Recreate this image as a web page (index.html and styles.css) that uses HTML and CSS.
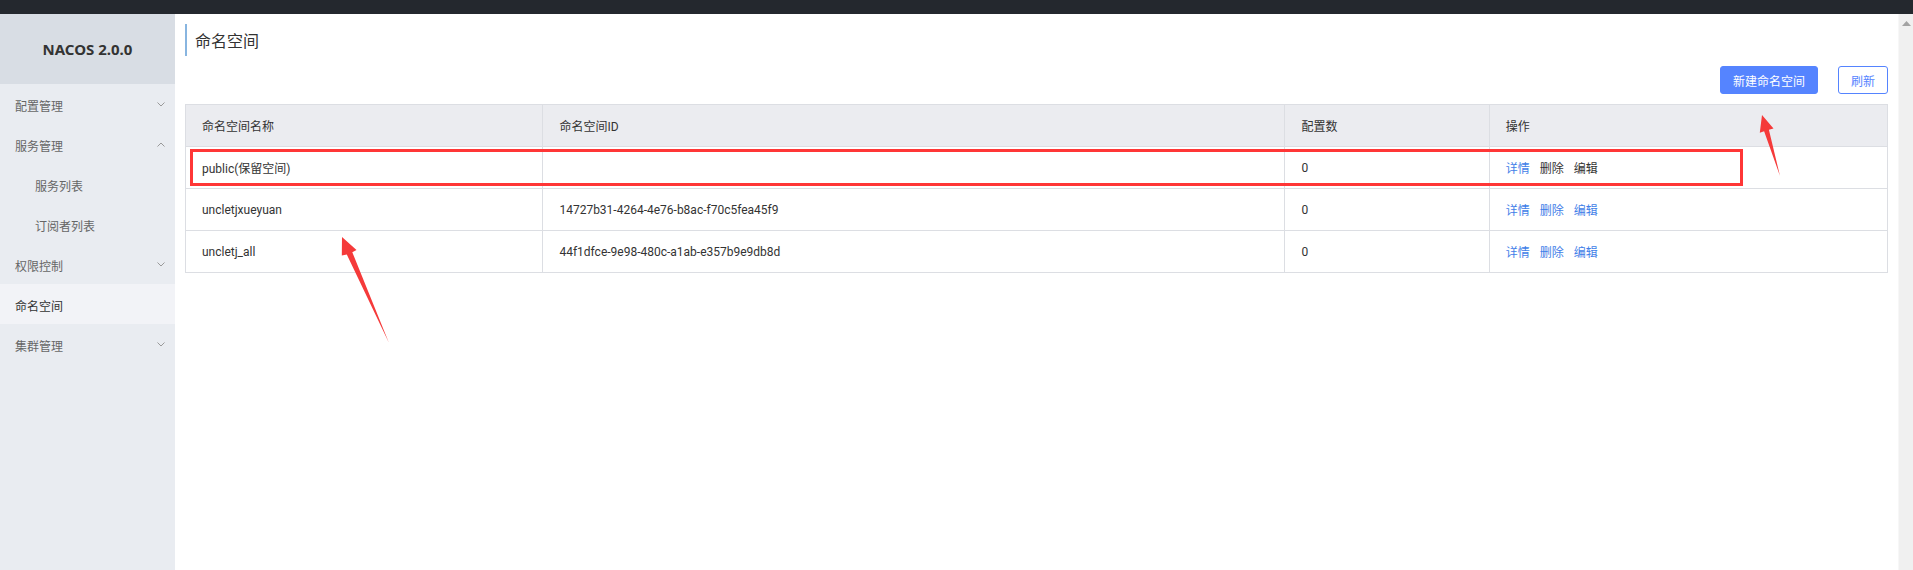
FILE: index.html
```html
<!DOCTYPE html>
<html lang="zh-CN">
<head>
    <meta charset="UTF-8">
    <title>Nacos - 命名空间</title>
    <link rel="stylesheet" href="styles.css">
</head>
<body>
    <div class="topbar"></div>
    <div class="layout">
        <aside class="sidebar">
            <div class="logo">NACOS 2.0.0</div>
            <ul class="menu">
                <li class="menu-item">配置管理
                    <svg class="chevron" width="8" height="5" viewBox="0 0 8 5"><polyline points="0.5,0.5 4,4 7.5,0.5"/></svg>
                </li>
                <li class="menu-item">服务管理
                    <svg class="chevron" width="8" height="5" viewBox="0 0 8 5"><polyline points="0.5,4.5 4,1 7.5,4.5"/></svg>
                </li>
                <li class="menu-item sub">服务列表</li>
                <li class="menu-item sub">订阅者列表</li>
                <li class="menu-item">权限控制
                    <svg class="chevron" width="8" height="5" viewBox="0 0 8 5"><polyline points="0.5,0.5 4,4 7.5,0.5"/></svg>
                </li>
                <li class="menu-item active">命名空间</li>
                <li class="menu-item">集群管理
                    <svg class="chevron" width="8" height="5" viewBox="0 0 8 5"><polyline points="0.5,0.5 4,4 7.5,0.5"/></svg>
                </li>
            </ul>
        </aside>

        <main class="main">
            <div class="page-title">命名空间</div>
            <div class="toolbar">
                <button class="btn btn-primary">新建命名空间</button>
                <button class="btn btn-normal">刷新</button>
            </div>
            <table class="ns-table">
                <colgroup>
                    <col style="width: 21%">
                    <col style="width: 43.6%">
                    <col style="width: 12%">
                    <col>
                </colgroup>
                <thead>
                    <tr>
                        <th>命名空间名称</th>
                        <th>命名空间ID</th>
                        <th>配置数</th>
                        <th>操作</th>
                    </tr>
                </thead>
                <tbody>
                    <tr>
                        <td>public(保留空间)</td>
                        <td></td>
                        <td>0</td>
                        <td class="ops"><a href="#">详情</a><span>删除</span><span>编辑</span></td>
                    </tr>
                    <tr>
                        <td>uncletjxueyuan</td>
                        <td>14727b31-4264-4e76-b8ac-f70c5fea45f9</td>
                        <td>0</td>
                        <td class="ops"><a href="#">详情</a><a href="#">删除</a><a href="#">编辑</a></td>
                    </tr>
                    <tr>
                        <td>uncletj_all</td>
                        <td>44f1dfce-9e98-480c-a1ab-e357b9e9db8d</td>
                        <td>0</td>
                        <td class="ops"><a href="#">详情</a><a href="#">删除</a><a href="#">编辑</a></td>
                    </tr>
                </tbody>
            </table>
        </main>

        <div class="scrollbar">
            <svg class="scroll-up" width="9" height="5" viewBox="0 0 9 5"><polygon points="0,5 4.5,0 9,5"/></svg>
        </div>
    </div>

    <!-- annotations drawn over the screenshot -->
    <div class="mark-box"></div>
    <svg class="arrows" width="1913" height="570" viewBox="0 0 1913 570">
        <polygon points="342,237 356.5,250 352.3,252.2 389,343 346.8,254.6 341.8,255.5"/>
        <polygon points="1762,115 1773.5,128.5 1768.9,129.8 1780,176 1764.1,131.2 1759.8,132.8"/>
    </svg>
</body>
</html>
```

FILE: styles.css
```css
* {
    box-sizing: border-box;
}
body {
    margin: 0;
    padding: 0;
    height: 570px;
    overflow: hidden;
    font-family: Roboto, "Noto Sans CJK SC", sans-serif;
    font-size: 12px;
    color: #333;
    background: #fff;
}
.topbar {
    height: 14px;
    background: #24282e;
}
.layout {
    display: flex;
    height: 556px;
}
.sidebar {
    width: 175px;
    flex-shrink: 0;
    background: #e9ecf1;
}
.logo {
    height: 70px;
    line-height: 70px;
    text-align: center;
    background: #d8dde4;
    font-family: "Noto Sans", sans-serif;
    font-size: 15px;
    font-weight: bold;
    color: #333;
}
.menu {
    list-style: none;
    margin: 0;
    padding: 0;
}
.menu-item {
    position: relative;
    height: 40px;
    padding: 4px 0 0 15px;
    line-height: 36px;
    color: #666;
    font-family: "Noto Sans CJK SC", sans-serif;
}
.menu-item.sub {
    padding-left: 35px;
}
.menu-item.active {
    background: #f2f3f7;
    color: #333;
}
.chevron {
    position: absolute;
    right: 10px;
    top: 18px;
    fill: none;
    stroke: #999;
    stroke-width: 1;
}
.main {
    flex: 1;
    padding: 10px;
}
.page-title {
    height: 32px;
    line-height: 32px;
    border-left: 2px solid #88b5e0;
    padding-left: 8px;
    font-size: 16px;
    font-family: "Noto Sans CJK SC", sans-serif;
    color: #333;
}
.toolbar {
    display: flex;
    justify-content: flex-end;
    gap: 20px;
    margin: 10px 0;
}
.btn {
    height: 28px;
    padding: 0 12px;
    border-radius: 3px;
    font-family: "Noto Sans CJK SC", sans-serif;
    font-size: 12px;
    cursor: pointer;
}
.btn-primary {
    background: #5584ff;
    border: 1px solid #5584ff;
    color: #fff;
}
.btn-normal {
    background: #fff;
    border: 1px solid #5584ff;
    color: #5584ff;
}
.ns-table {
    width: 100%;
    border-collapse: collapse;
    table-layout: fixed;
}
.ns-table th,
.ns-table td {
    height: 42px;
    padding: 0 16px;
    border: 1px solid #dcdee3;
    text-align: left;
    font-weight: normal;
    color: #333;
    white-space: nowrap;
}
.ns-table th {
    background: #ebecf0;
}
.ops a,
.ops span {
    margin-right: 10px;
    text-decoration: none;
}
.ops a {
    color: #3f7ee8;
}
.ops span {
    color: #333;
}
.scrollbar {
    width: 15px;
    flex-shrink: 0;
    background: #f0f0f0;
    border-left: 1px solid #f7f7f7;
    display: flex;
    justify-content: center;
    padding-top: 7px;
}
.scroll-up {
    fill: #a3a3a3;
}
.mark-box {
    position: absolute;
    left: 190px;
    top: 149px;
    width: 1553px;
    height: 37px;
    border: 3px solid #ff3636;
}
.arrows {
    position: absolute;
    left: 0;
    top: 0;
    fill: #f53a3a;
    pointer-events: none;
}
```
